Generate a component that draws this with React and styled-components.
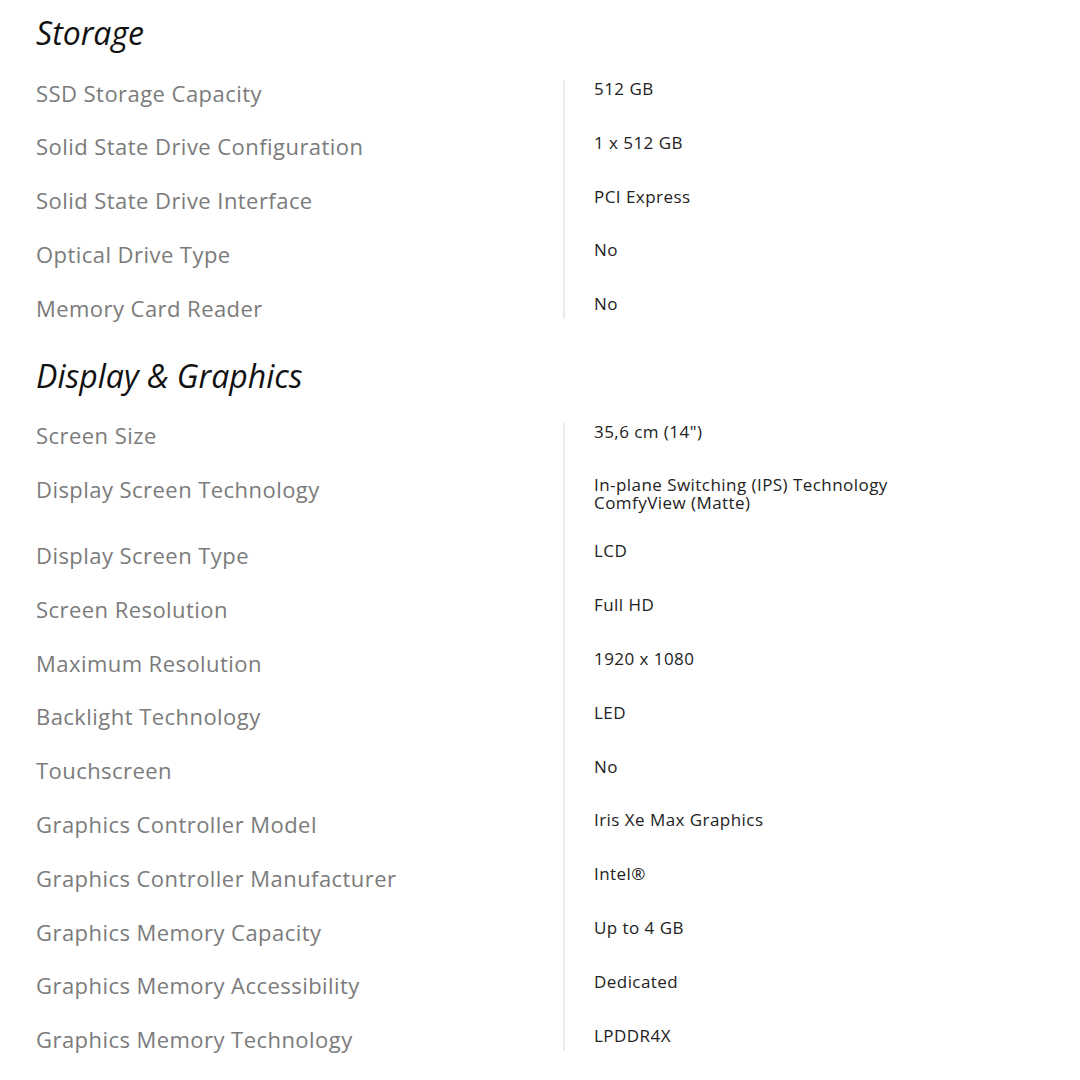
import React from 'react';
import styled, { createGlobalStyle } from 'styled-components';

const GlobalStyle = createGlobalStyle`
  html, body {
    margin: 0;
    padding: 0;
    background: #ffffff;
  }
  body {
    font-family: "Open Sans", "Noto Sans", Arial, sans-serif;
  }
`;

const Page = styled.main`
  width: 1080px;
  min-height: 1080px;
  box-sizing: border-box;
  padding: 13px 36px 0;
  display: flex;
  flex-direction: column;
  gap: 34px;
`;

const Section = styled.section`
  display: flex;
  flex-direction: column;
`;

const Heading = styled.h2`
  margin: 0 0 25.5px;
  font-size: 32px;
  line-height: 40px;
  font-style: italic;
  font-weight: 400;
  color: #111111;
`;

const SpecGrid = styled.div`
  display: grid;
  grid-template-columns: 527px 2px 1fr;
`;

const Divider = styled.span`
  grid-column: 2;
  grid-row: 1 / span ${props => props.rows};
  background: #ebebeb;
  margin: 1.5px 0 2.5px;
`;

const Label = styled.div`
  grid-column: 1;
  font-size: 22px;
  line-height: 28px;
  letter-spacing: 0.45px;
  color: #7b7b7b;
  padding-bottom: ${props => (props.last ? '0' : '25.8px')};
`;

const Value = styled.div`
  grid-column: 3;
  padding: 1.5px 0 ${props => (props.last ? '0' : '28.5px')} 29px;
  font-size: 17px;
  line-height: 18px;
  letter-spacing: 0.45px;
  color: #222222;
`;

const sections = [
  {
    title: 'Storage',
    rows: [
      ['SSD Storage Capacity', ['512 GB']],
      ['Solid State Drive Configuration', ['1 x 512 GB']],
      ['Solid State Drive Interface', ['PCI Express']],
      ['Optical Drive Type', ['No']],
      ['Memory Card Reader', ['No']],
    ],
  },
  {
    title: 'Display & Graphics',
    rows: [
      ['Screen Size', ['35,6 cm (14")']],
      ['Display Screen Technology', ['In-plane Switching (IPS) Technology', 'ComfyView (Matte)']],
      ['Display Screen Type', ['LCD']],
      ['Screen Resolution', ['Full HD']],
      ['Maximum Resolution', ['1920 x 1080']],
      ['Backlight Technology', ['LED']],
      ['Touchscreen', ['No']],
      ['Graphics Controller Model', ['Iris Xe Max Graphics']],
      ['Graphics Controller Manufacturer', ['Intel®']],
      ['Graphics Memory Capacity', ['Up to 4 GB']],
      ['Graphics Memory Accessibility', ['Dedicated']],
      ['Graphics Memory Technology', ['LPDDR4X']],
    ],
  },
];

function SpecSection({ title, rows }) {
  return (
    <Section>
      <Heading>{title}</Heading>
      <SpecGrid>
        <Divider rows={rows.length} />
        {rows.map(([label, lines], i) => {
          const last = i === rows.length - 1;
          return (
            <React.Fragment key={label}>
              <Label last={last}>{label}</Label>
              <Value last={last}>
                {lines.map(line => <div key={line}>{line}</div>)}
              </Value>
            </React.Fragment>
          );
        })}
      </SpecGrid>
    </Section>
  );
}

export default function App() {
  return (
    <>
      <GlobalStyle />
      <Page>
        {sections.map(s => <SpecSection key={s.title} {...s} />)}
      </Page>
    </>
  );
}
